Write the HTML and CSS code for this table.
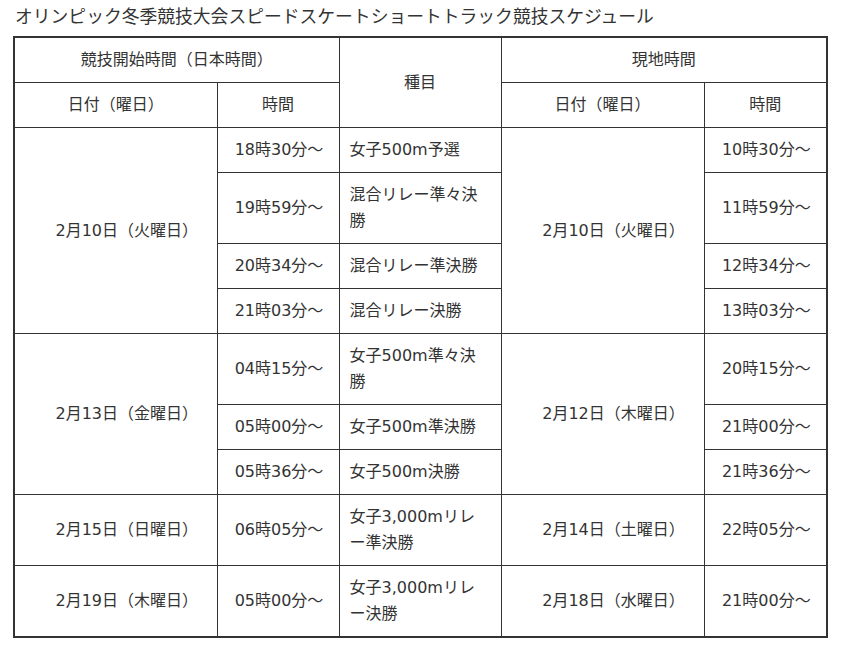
FILE: index.html
```html
<!DOCTYPE html>
<html lang="ja">
<head>
<meta charset="utf-8">
<title>スケジュール</title>
<link rel="stylesheet" href="styles.css">
</head>
<body>
<div class="page">
  <p class="title">オリンピック冬季競技大会スピードスケートショートトラック競技スケジュール</p>
  <table class="schedule">
    <colgroup>
      <col class="c-date">
      <col class="c-time">
      <col class="c-event">
      <col class="c-date2">
      <col class="c-time2">
    </colgroup>
    <thead>
      <tr>
        <th colspan="2">競技開始時間（日本時間）</th>
        <th rowspan="2">種目</th>
        <th colspan="2">現地時間</th>
      </tr>
      <tr>
        <th>日付（曜日）</th>
        <th>時間</th>
        <th>日付（曜日）</th>
        <th>時間</th>
      </tr>
    </thead>
    <tbody>
      <tr>
        <td class="date" rowspan="4">2月10日（火曜日）</td>
        <td class="time">18時30分～</td>
        <td class="event">女子500m予選</td>
        <td class="date" rowspan="4">2月10日（火曜日）</td>
        <td class="time">10時30分～</td>
      </tr>
      <tr>
        <td class="time">19時59分～</td>
        <td class="event">混合リレー準々決<br>勝</td>
        <td class="time">11時59分～</td>
      </tr>
      <tr>
        <td class="time">20時34分～</td>
        <td class="event">混合リレー準決勝</td>
        <td class="time">12時34分～</td>
      </tr>
      <tr>
        <td class="time">21時03分～</td>
        <td class="event">混合リレー決勝</td>
        <td class="time">13時03分～</td>
      </tr>
      <tr>
        <td class="date" rowspan="3">2月13日（金曜日）</td>
        <td class="time">04時15分～</td>
        <td class="event">女子500m準々決<br>勝</td>
        <td class="date" rowspan="3">2月12日（木曜日）</td>
        <td class="time">20時15分～</td>
      </tr>
      <tr>
        <td class="time">05時00分～</td>
        <td class="event">女子500m準決勝</td>
        <td class="time">21時00分～</td>
      </tr>
      <tr>
        <td class="time">05時36分～</td>
        <td class="event">女子500m決勝</td>
        <td class="time">21時36分～</td>
      </tr>
      <tr>
        <td class="date">2月15日（日曜日）</td>
        <td class="time">06時05分～</td>
        <td class="event">女子3,000mリレ<br>ー準決勝</td>
        <td class="date">2月14日（土曜日）</td>
        <td class="time">22時05分～</td>
      </tr>
      <tr>
        <td class="date">2月19日（木曜日）</td>
        <td class="time">05時00分～</td>
        <td class="event">女子3,000mリレ<br>ー決勝</td>
        <td class="date">2月18日（水曜日）</td>
        <td class="time">21時00分～</td>
      </tr>
    </tbody>
  </table>
</div>
</body>
</html>
```

FILE: styles.css
```css
html, body {
  margin: 0;
  padding: 0;
  background: #ffffff;
}

body {
  font-family: "DejaVu Sans", "Noto Sans CJK JP", sans-serif;
  color: #333333;
}

.page {
  padding: 4px 0 0 13px;
}

.title {
  margin: 0 0 6px 2px;
  font-size: 17.8px;
  line-height: 26px;
  color: #333333;
}

.schedule {
  border-collapse: collapse;
  table-layout: fixed;
  width: 813px;
  border: 2px solid #333333;
  font-size: 16px;
  line-height: 26px;
}

.c-date { width: 203px; }
.c-time { width: 122px; }
.c-event { width: 162px; }
.c-date2 { width: 203px; }
.c-time2 { width: 123px; }

.schedule th,
.schedule td {
  border: 1px solid #333333;
  padding: 9px 10px;
  font-weight: normal;
  vertical-align: middle;
  color: #333333;
}

.schedule th {
  text-align: center;
}

.schedule td.date {
  text-align: center;
  padding-left: 22px;
  padding-right: 0;
}

.schedule td.time {
  text-align: center;
  padding-left: 8px;
  padding-right: 6px;
}

.schedule td.event {
  text-align: left;
  padding-left: 10px;
  padding-right: 8px;
}
```
